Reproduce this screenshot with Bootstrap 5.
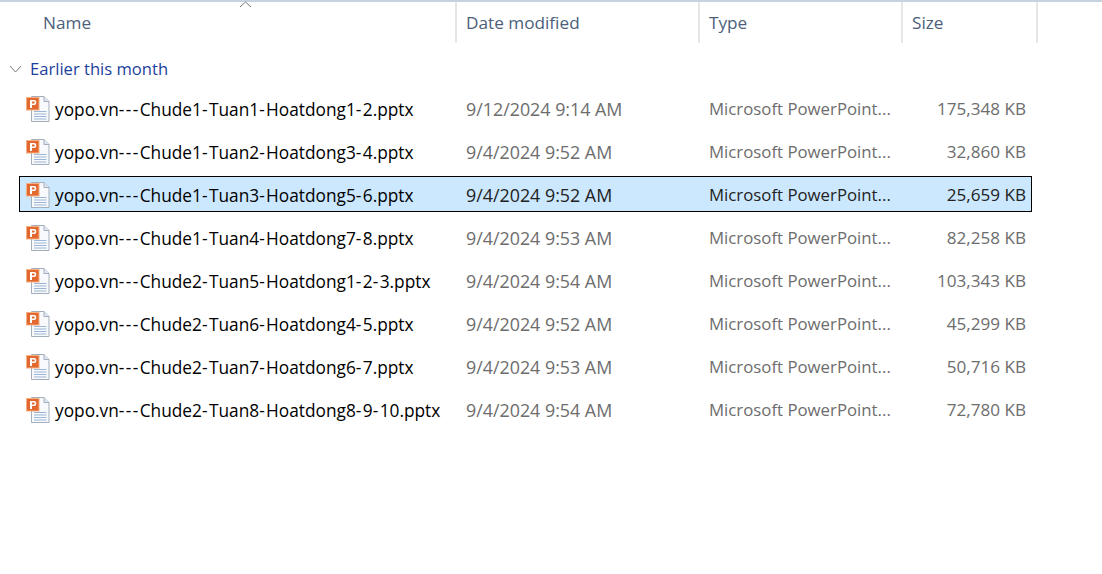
<!DOCTYPE html>
<html lang="en">
<head>
  <meta charset="UTF-8">
  <title>Earlier this month</title>
  <link href="https://cdn.jsdelivr.net/npm/bootstrap@5.3.0/dist/css/bootstrap.min.css" rel="stylesheet">
  <style>
    body {
      font-family: "Open Sans", "Noto Sans", sans-serif;
      font-size: 17px;
      background: #fff;
      overflow: hidden;
    }
    .explorer-pane {
      border-top: 2px solid #c5d3e0;
      height: 574px;
    }
    .col-name { width: 457px; }
    .col-date { width: 243px; }
    .col-type { width: 203px; }
    .col-size { width: 135px; }
    .head-row { height: 41px; color: #4c607a; position: relative; font-size: 17.2px; }
    .head-cell {
      border-right: 2px solid #e6e6e6;
      padding-left: 9px;
      line-height: 42px;
    }
    .head-cell.col-name { padding-left: 43px; }
    .sort-arrow { position: absolute; left: 239px; top: -1px; }
    .group-row { height: 47px; padding: 5px 0 0 9px; gap: 8px; color: #1c3f9b; font-size: 16.6px; }
    .file-row {
      height: 36px;
      margin: 0 0 7px 19px;
      width: 1013px;
      border: 1px solid transparent;
      color: #6d6d6d;
      font-size: 17.85px;
      padding-top: 2px;
    }
    .file-row.is-selected {
      background: #cce8ff;
      border-color: #000;
      color: #222;
    }
    .file-row .col-name { width: 446px; color: #000; padding-left: 6px; gap: 5px; font-size: 17.3px; }
    .file-row .col-date { width: 243px; }
    .file-row .col-type { width: 212px; font-size: 16.8px; }
    .file-row .col-size { width: 105px; text-align: right; font-size: 17.1px; white-space: nowrap; }
    .name-text { padding-top: 2px; }
    .name-dash { letter-spacing: 1.4px; }
  </style>
</head>
<body>
  <div class="explorer-pane">
    <div class="head-row d-flex">
      <svg class="sort-arrow" width="13" height="7" viewBox="0 0 13 7"><path d="M1 6 L6.5 1 L12 6" fill="none" stroke="#777" stroke-width="1"/></svg>
      <div class="head-cell col-name">Name</div>
      <div class="head-cell col-date">Date modified</div>
      <div class="head-cell col-type">Type</div>
      <div class="head-cell col-size">Size</div>
    </div>
    <div class="group-row d-flex align-items-center">
      <svg width="13" height="8" viewBox="0 0 13 8"><path d="M1 1 L6.5 7 L12 1" fill="none" stroke="#777" stroke-width="1"/></svg>
      <span>Earlier this month</span>
    </div>
    <div id="fileList"></div>
  </div>

  <script>
    const files = [
      ['yopo.vn---Chude1-Tuan1-Hoatdong1-2.pptx', '9/12/2024 9:14 AM', '175,348 KB'],
      ['yopo.vn---Chude1-Tuan2-Hoatdong3-4.pptx', '9/4/2024 9:52 AM', '32,860 KB'],
      ['yopo.vn---Chude1-Tuan3-Hoatdong5-6.pptx', '9/4/2024 9:52 AM', '25,659 KB'],
      ['yopo.vn---Chude1-Tuan4-Hoatdong7-8.pptx', '9/4/2024 9:53 AM', '82,258 KB'],
      ['yopo.vn---Chude2-Tuan5-Hoatdong1-2-3.pptx', '9/4/2024 9:54 AM', '103,343 KB'],
      ['yopo.vn---Chude2-Tuan6-Hoatdong4-5.pptx', '9/4/2024 9:52 AM', '45,299 KB'],
      ['yopo.vn---Chude2-Tuan7-Hoatdong6-7.pptx', '9/4/2024 9:53 AM', '50,716 KB'],
      ['yopo.vn---Chude2-Tuan8-Hoatdong8-9-10.pptx', '9/4/2024 9:54 AM', '72,780 KB']
    ];
    const icon = '<svg width="24" height="26" viewBox="0 0 24 26" class="flex-shrink-0">' +
      '<path d="M5.5 .5H18L23 5.5V25.5H5.5Z" fill="#f7f9fc" stroke="#a3adbb"/>' +
      '<path d="M18 .5V5.5H23" fill="#dfe8f2" stroke="#a3adbb"/>' +
      '<path d="M8 15.5H20.5M8 18H20.5M8 20.5H20.5M8 23H20.5" stroke="#9bb6d6"/>' +
      '<rect x=".5" y="1.5" width="12.5" height="12.5" fill="#e2682f" stroke="#f4b183"/>' +
      '<path d="M4 4H8.3C11 4 11 9 8.3 9H6V12H4Z M6 5.5V7.5H7.9C9 7.5 9 5.5 7.9 5.5Z" fill="#fff" fill-rule="evenodd"/>' +
      '</svg>';
    const list = document.getElementById('fileList');
    files.forEach((file, index) => {
      const row = document.createElement('div');
      row.className = 'file-row d-flex align-items-center' + (index === 2 ? ' is-selected' : '');
      const name = file[0].replace(/-/g, '<span class="name-dash">-</span>');
      row.innerHTML = '<div class="col-name d-flex align-items-center">' + icon + '<span class="name-text">' + name + '</span></div>' +
        '<div class="col-date">' + file[1] + '</div>' +
        '<div class="col-type text-truncate">Microsoft PowerPoint...</div>' +
        '<div class="col-size">' + file[2] + '</div>';
      list.appendChild(row);
    });
  </script>
  <script src="https://cdn.jsdelivr.net/npm/bootstrap@5.3.0/dist/js/bootstrap.bundle.min.js"></script>
</body>
</html>
